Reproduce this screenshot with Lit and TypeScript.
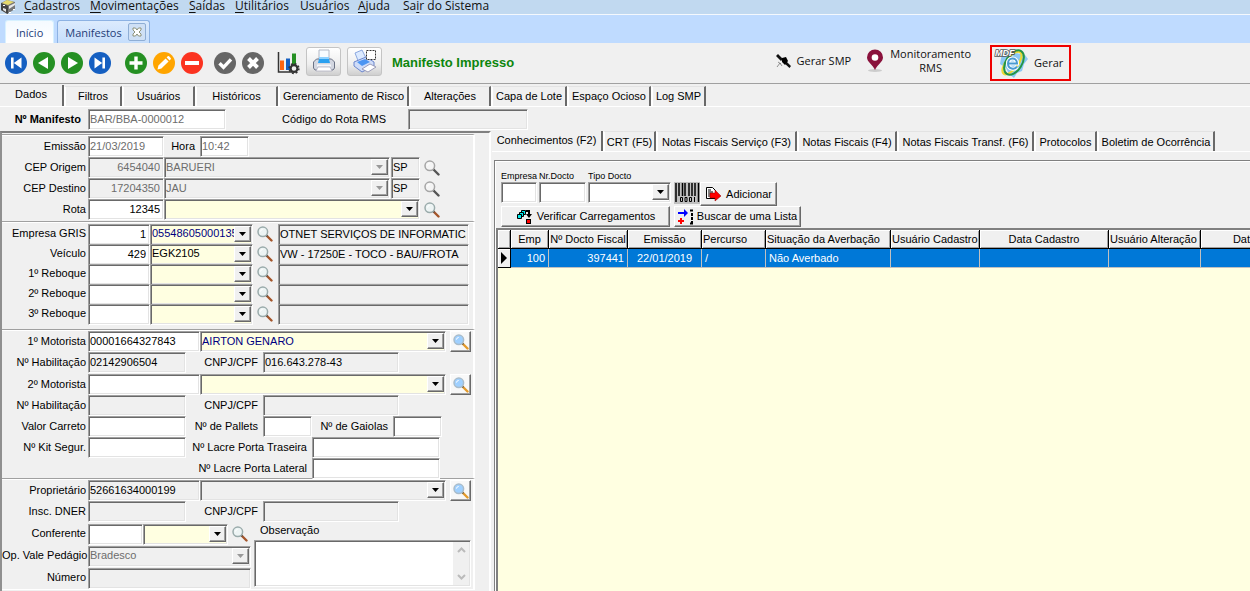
import { LitElement, html, css, svg } from "lit";
import { customElement, property } from "lit/decorators.js";
import { classMap } from "lit/directives/class-map.js";

const disc = (fill: string, glyph: unknown) => html`
  <svg width="24" height="24" viewBox="0 0 24 24" aria-hidden="true">
    <circle cx="12" cy="12" r="11" fill=${fill} />${glyph}
  </svg>`;

const NAV = [
  { label: "Primeiro", icon: disc("#155fc1", svg`<path d="M7 6.5h2.600v11H7zM17.500 6.500v11L9.800 12z" fill="#fff"/>`) },
  { label: "Anterior", icon: disc("#259023", svg`<path d="M16 6v12L6 12z" fill="#fff"/>`) },
  { label: "Próximo", icon: disc("#259023", svg`<path d="M8 6v12l10-6z" fill="#fff"/>`) },
  { label: "Último", icon: disc("#155fc1", svg`<path d="M14.400 6.500H17v11h-2.600zM6.500 6.500v11l7.700-5.500z" fill="#fff"/>`) },
];
const EDIT = [
  { label: "Incluir", icon: disc("#259023", svg`<path d="M10.300 5.500h3.400v4.800h4.800v3.400h-4.800v4.800h-3.400v-4.800H5.500v-3.400h4.800z" fill="#fff"/>`) },
  { label: "Alterar", icon: disc("#ffa500", svg`<path d="M5.500 18.500l.9-3.900 7.200-7.200 3 3-7.200 7.200zM14.600 6.400l1.100-1.100q.7-.6 1.400 0l1.600 1.600q.6.7 0 1.400l-1.100 1.100z" fill="#fff"/>`) },
  { label: "Excluir", icon: disc("#fb3320", svg`<path d="M5 10h14v4H5z" fill="#fff"/>`) },
];
const CONFIRM = [
  { label: "Confirmar", icon: disc("#666", svg`<path d="M6.500 12.300l4 4 7.500-8" fill="none" stroke="#fff" stroke-width="3.400"/>`) },
  { label: "Cancelar", icon: disc("#666", svg`<path d="M7.500 7.500l9 9M16.500 7.500l-9 9" stroke="#fff" stroke-width="4"/>`) },
];

const lens = (glass: string, rim: string, handle: string) => html`
  <svg width="16" height="16" viewBox="0 0 16 16" aria-hidden="true">
    <path d="M9.500 9.500l5 5" stroke=${handle} stroke-width="2.400" stroke-linecap="round" />
    <path d="M8.800 8.800l1.600 1.600" stroke="#555" stroke-width="1.600" />
    <circle cx="5.800" cy="5.800" r="4.800" fill=${glass} stroke=${rim} stroke-width="1.500" />
    <path d="M3.400 5.600a2.600 2.600 0 0 1 2.300-2.200" stroke="#fff" fill="none" />
  </svg>`;

const controls = css`
  input, select, textarea, button { font: inherit; color: inherit; margin: 0; border-radius: 0; }
  .field {
    box-sizing: border-box; height: 21px; padding: 0 1px; background: #fff; outline: 0;
    border: 1px solid; border-color: #a0a0a0 #fff #fff #a0a0a0;
    box-shadow: inset 1px 1px #696969, inset -1px -1px #e3e3e3;
  }
  input.field { padding: 0 2px 1px 1px; min-width: 0; }
  .combo { display: flex; padding: 1px 1px 2px; }
  .combo select {
    appearance: none; flex: 1; min-width: 0; border: 0; padding: 0; background: transparent; outline: 0; opacity: 1;
  }
  .drop {
    flex: none; width: 17px; box-sizing: border-box; display: grid; place-items: center; background: #f0f0f0;
    border: 1px solid; border-color: #fff #696969 #696969 #fff; box-shadow: inset -1px -1px #a0a0a0;
  }
  .yellow { background: #ffffe1; }
  .gray { background: #f0f0f0; }
  .dim { color: #6d6d6d; }
  input.num { text-align: right; padding-right: 3px; }
  .navy { color: #000080; }
`;

@customElement("combo-box")
class ComboBox extends LitElement {
  @property() value = "";
  @property() label = "";
  @property() look = "yellow";
  static styles = [controls, css`
    :host { display: block; min-width: 0; }
    .combo { width: 100%; }
  `];
  render() {
    const dim = this.look.includes("dim");
    return html`<div class="field combo ${this.look}">
      <select aria-label=${this.label} ?disabled=${dim}><option>${this.value}</option></select>
      <span class="drop"><svg width="7" height="4"><path d="M0 0h7L3.500 4z" fill=${dim ? "#999" : "#000"} /></svg></span>
    </div>`;
  }
}

const COLUMNS = [
  { title: "Emp", width: 38, value: "100", align: "end" },
  { title: "Nº Docto Fiscal", width: 79, value: "397441", align: "end" },
  { title: "Emissão", width: 74, value: "22/01/2019", align: "mid" },
  { title: "Percurso", width: 64, value: "/", align: "start" },
  { title: "Situação da Averbação", width: 125, value: "Não Averbado", align: "start" },
  { title: "Usuário Cadastro", width: 89, value: "", align: "start" },
  { title: "Data Cadastro", width: 129, value: "", align: "start" },
  { title: "Usuário Alteração", width: 92, value: "", align: "start" },
  { title: "Data Alteração", width: 137, value: "", align: "start" },
];

const MENU = [["", "C", "adastros"], ["", "M", "ovimentações"], ["", "S", "aídas"], ["", "U", "tilitários"], ["Usuá", "r", "ios"], ["", "A", "juda"], ["Sa", "i", "r do Sistema"]];
const PAGES = ["Dados", "Filtros", "Usuários", "Históricos", "Gerenciamento de Risco", "Alterações", "Capa de Lote", "Espaço Ocioso", "Log SMP"];
const DETAILS = ["Conhecimentos (F2)", "CRT (F5)", "Notas Fiscais Serviço (F3)", "Notas Fiscais (F4)", "Notas Fiscais Transf. (F6)", "Protocolos", "Boletim de Ocorrência"];

@customElement("app-root")
class AppRoot extends LitElement {
  static styles = [controls, css`
    :host {
      display: flex; flex-direction: column; height: 100vh; overflow: hidden;
      background: #f0f0f0; color: #000; font: 11px/13px "Liberation Sans", Arial, sans-serif;
    }
    svg { display: block; flex: none; }
    button { cursor: pointer; }
    .ui { font-family: "Open Sans", "Noto Sans", sans-serif; }

    .menu { flex: none; height: 14px; display: flex; align-items: flex-end; background: #c1d9f0; border-bottom: 1px solid #f4f8fd; font-size: 12px; line-height: 16px; }
    .menu nav { display: grid; grid-template-columns: 66px 99px 46px 65px 58px 45px auto; padding-left: 8px; }
    .menu a { color: #111; text-decoration: none; white-space: nowrap; }
    .menu u { text-underline-offset: 2px; }
    .windows { flex: none; height: 28px; display: flex; align-items: flex-end; gap: 3px; padding-left: 5px; background: #bfdbff; box-sizing: border-box; }
    .win { height: 23px; box-sizing: border-box; display: flex; align-items: center; color: #1e3c78; border: 1px solid #8db2e3; border-bottom: 0; border-radius: 3px 3px 0 0; padding: 0 7px; background: linear-gradient(#dcebfd, #c6defc); }
    .win.on { padding: 0 10px; background: linear-gradient(#f4faff, #fff); border-color: #d7f1ff; }
    .win button { display: grid; place-items: center; width: 18px; height: 18px; margin-left: 6px; margin-right: -4px; padding: 0; border: 1px solid #8faed5; border-radius: 2px; background: #cfe0f5; }

    .tools { flex: none; height: 40px; display: flex; align-items: center; border-bottom: 1px solid #a0a0a0; padding: 0 179px 0 4px; }
    .tools button { border: 0; background: none; padding: 0; }
    .set { display: flex; gap: 4px; margin-right: 12px; }
    .set:nth-child(2) { margin-right: 9px; }
    .prints { display: flex; align-items: center; gap: 6px; }
    .prints .prints { padding-bottom: 4px; }
    .tools .raised { width: 35px; height: 29px; display: grid; place-items: center; border: 1px solid #c4c4c4; border-radius: 3px; background: linear-gradient(#fff, #eee 60%, #cfcfcf); }
    .status { flex: 1; margin-left: 10px; padding-bottom: 1px; font-size: 13px; line-height: 16px; font-weight: bold; color: #0d860d; }
    .tools .act { display: flex; align-items: center; gap: 4px; line-height: 14px; padding-bottom: 4px; color: #111; }
    .tools .monitor { margin-left: 15px; gap: 6px; }
    .tools .mdfe { margin-left: 19px; height: 36px; width: 81px; box-sizing: border-box; border: 2px solid #f00000; gap: 6px; padding: 0 0 0 2px; }

    .tabs { display: grid; justify-content: start; align-items: end; flex: none; }
    .tabs button { height: 20px; padding: 0; white-space: nowrap; background: #f0f0f0; border: 0; border-left: 2px solid #fff; border-right: 2px solid #696969; border-top: 1px solid #e3e3e3; }
    .tabs button.on { border-left: 0; border-top: 0; padding-bottom: 3px; }
    .pages { height: 21px; margin-top: 1px; border-bottom: 1px solid #fff; grid-template-columns: 64px 58px 73px 83px 131px 82px 76px 84px 55px; }
    .pages .on { height: 21px; }
    .details { height: 20px; border-bottom: 1px solid #fff; grid-template-columns: 111px 53px 141px 100px 137px 63px 118px; }
    .details button { padding-top: 2px; }
    .details .on { height: 20px; padding-bottom: 1px; }

    .ident { flex: none; display: flex; align-items: center; height: 24px; padding-left: 4px; }
    .ident label { width: 77px; text-align: right; margin-right: 7px; white-space: nowrap; }
    .ident .strong { font-weight: bold; }
    .ident .route { width: 160px; margin-right: 22px; }
    .ident .number { width: 138px; }
    .ident .rms { width: 120px; }

    main { flex: 1; min-height: 0; display: flex; }
    .left { flex: none; width: 491px; box-sizing: border-box; border-top: 2px solid #808080; border-left: 2px solid #909090; border-right: 2px solid #fff; }
    .group { box-sizing: border-box; width: 473px; border-top: 1px solid #a0a0a0; border-right: 2px solid #fff; box-shadow: inset 0 1px #fff; padding: 1px 0 1px; }
    .g1 { margin-top: 1px; height: 87px; }
    .g2 { height: 108px; padding-top: 2px; }
    .g3 { height: 149px; }
    .g4 { height: 112px; border-bottom: 1px solid #fff; }
    .row { display: flex; align-items: center; height: 21px; }
    .row > label:first-child { width: 84px; text-align: right; margin-right: 2px; white-space: nowrap; flex: none; }
    .row label { flex: none; padding-bottom: 1px; }
    .row .field, .row combo-box { flex: none; }
    .g1 .row label { padding-bottom: 0; }
    .g2 .row { height: 20px; }
    .g4 .split .row { height: 22px; }
    .pair { margin-bottom: 1px; }
    .pair + .pair { margin-bottom: 0; }
    .find { width: 16px; height: 16px; padding: 0; border: 0; background: none; margin-left: 4px; flex: none; }
    .find.box { width: 21px; height: 21px; display: grid; place-items: center; background: #f8f8f8; border: 1px solid; border-color: #fff #696969 #696969 #fff; box-shadow: inset -1px -1px #a0a0a0; }
    .w29 { width: 29px; } .w48 { width: 49px; } .w55 { width: 55px; } .w61 { width: 62px; } .w75 { width: 76px; }
    .w98 { width: 98px; } .w111 { width: 112px; } .w128 { width: 128px; } .w136 { width: 136px; } .w163 { width: 163px; } .w191 { width: 191px; }
    .c85 { width: 85px; } .c102 { width: 103px; } .c225 { width: 226px; } .c245 { width: 246px; } .c255 { width: 256px; }
    .gap { margin-left: 1px; }
    .row combo-box.gap { margin-left: 0; }
    .mid { text-align: right; width: 72px; margin-right: 5px; }
    .mid.wide { width: 121px; }
    .cage { width: 76px; }
    .hour { width: 31px; margin-right: 5px; text-align: right; }
    .desc { margin-left: 5px; }
    .split { display: flex; }
    .notes { display: flex; flex-direction: column; margin-left: 3px; width: 217px; }
    .notes label { height: 17px; padding-left: 6px; padding-top: 1px; box-sizing: border-box; }
    .memo { flex: none; height: 47px; display: flex; padding: 1px; }
    .memo textarea { flex: 1; min-width: 0; border: 0; padding: 0; resize: none; outline: 0; overflow: hidden; }
    .bar { width: 16px; background: #f0f0f0; display: flex; flex-direction: column; justify-content: space-between; align-items: center; padding: 5px 0; box-sizing: border-box; }

    .right { flex: 1; min-width: 0; display: flex; flex-direction: column; padding-left: 1px; }
    .sheet { flex: 1; min-height: 0; display: flex; flex-direction: column; margin: 8px 0 0 2px; border-top: 1px solid #808080; border-left: 1px solid #808080; box-shadow: inset 1px 1px #fff; }
    .query { margin: 10px 0 0 6px; height: 57px; flex: none; }
    .line { display: flex; align-items: flex-start; }
    .entry { display: flex; flex-direction: column; font-size: 9px; line-height: 11px; margin-right: 2px; }
    .entry label { white-space: nowrap; }
    .emp { width: 36px; } .doc { width: 47px; } .kind { width: 83px; }
    .push { box-sizing: border-box; height: 21px; padding: 0 4px; display: flex; align-items: center; justify-content: center; gap: 5px; white-space: nowrap; background: #f0f0f0; border: 1px solid; border-color: #fff #696969 #696969 #fff; box-shadow: inset -1px -1px #a0a0a0; }
    .first { margin-top: 11px; height: 24px; width: 77px; gap: 4px; }
    .scan { margin: 11px 0 0 1px; padding: 0; border: 0; background: none; }
    .check { width: 169px; margin-right: 4px; }
    .list { width: 127px; gap: 3px; padding: 0 2px; }
    .grid { flex: 1; min-height: 0; margin-left: 1px; background: #ffffe1; border-top: 2px solid #808080; border-left: 2px solid #808080; overflow: hidden; }
    table { border-collapse: separate; border-spacing: 0; table-layout: fixed; width: 840px; }
    th, td { height: 19px; padding: 0 2px; box-sizing: border-box; overflow: hidden; white-space: nowrap; font-weight: normal; border-right: 1px solid #c0c0c0; border-bottom: 1px solid #c0c0c0; }
    th { background: #f0f0f0; border-color: #000; box-shadow: inset 1px 1px #fff, inset -1px -1px #a0a0a0; padding: 0 1px; }
    td { background: #0078d7; color: #fff; padding: 0 3px; }
    tbody tr > :first-child { background: #f0f0f0; border-color: #000; box-shadow: inset 1px 1px #fff; padding: 0 3px; }
    .end { text-align: right; } .center { text-align: center; } .start { text-align: left; }
    .sel { width: 13px; }
  `];

  private find(what: string, kind = "") {
    const icon = kind === "box" ? lens("#9fd0ff", "#a9bccb", "#e39a2b")
      : kind === "off" ? lens("#f4f4f4", "#a5a5a5", "#555")
      : lens("#edf4f4", "#9aabab", "#a4552a");
    return html`<button class=${classMap({ find: true, box: kind === "box" })} aria-label="Pesquisar ${what}">${icon}</button>`;
  }

  private input(id: string, cls: string, value = "") {
    return html`<input id=${id} class="field ${cls}" aria-label=${id.replace(/-/g, " ")} .value=${value} />`;
  }

  private tabs(kind: string, names: string[]) {
    return html`<div class="tabs ${kind}" role="tablist">
      ${names.map((n, i) => html`<button role="tab" aria-selected=${i === 0} class=${i === 0 ? "on" : ""}>${n}</button>`)}
    </div>`;
  }

  private place(id: string, title: string, code: string, city: string) {
    return html`<div class="row"><label for=${id}>${title}</label>${this.input(id, "w75 gray dim num", code)}
      <combo-box class="c225 gap" look="gray dim" label=${title} .value=${city}></combo-box>
      ${this.input(id + "-uf", "w29 gray gap", "SP")}${this.find(title, "off")}</div>`;
  }

  private vehicle(id: string, title: string, code: string, plate: string, text: string, look = "yellow") {
    return html`<div class="row"><label for=${id}>${title}</label>${this.input(id, "w61 num", code)}
      <combo-box class="c102 gap" look=${look} label=${title} .value=${plate}></combo-box>
      ${this.find(title)}${this.input(id + "-desc", "w191 gray desc", text)}</div>`;
  }

  private person(id: string, title: string, code: string, name: string, cls: string, look: string, doc: string, docValue: string, cpf: string) {
    return html`<div class="pair">
      <div class="row"><label for=${id}>${title}</label>${this.input(id, "w111 " + cls, code)}
        <combo-box class="c245 gap" look=${look} label=${title} .value=${name}></combo-box>${this.find(title, "box")}</div>
      <div class="row"><label for="${id}-doc">${doc}</label>${this.input(id + "-doc", "w98 gray", docValue)}
        <label class="mid" for="${id}-cpf">CNPJ/CPF</label>${this.input(id + "-cpf", "w136 gray", cpf)}</div>
    </div>`;
  }

  private toolset(items: { label: string; icon: unknown }[]) {
    return html`<div class="set">${items.map((t) => html`<button aria-label=${t.label}>${t.icon}</button>`)}</div>`;
  }

  render() {
    return html`
      <header class="menu ui">
        <svg width="16" height="14" viewBox="0 0 16 14" aria-hidden="true">
          <path d="M1 3l6-3 8 2v7l-8 5-6-4z" fill="#777" /><path d="M1 3l7 3v8l-7-4z" fill="#444" />
          <path d="M2 3l5-3 7 2-6 3z" fill="#e5d96c" /><path d="M9 6l6-3v2L9 9zM3 8l3 1v3l-3-2z" fill="#e8e8e8" /><path d="M9 12h2v1H9zM13 9h2v1h-2zM3 5h2v1H3z" fill="#fff" />
        </svg>
        <nav>${MENU.map(([a, k, b]) => html`<a href="#">${a}<u>${k}</u>${b}</a>`)}</nav>
      </header>
      <div class="windows ui">
        <div class="win on">Início</div>
        <div class="win">Manifestos<button aria-label="Fechar"><svg width="10" height="10" viewBox="0 0 10 10"><path d="M1 1h2.500L5 3l1.500-2H9v2L7 5l2 2v2H6.500L5 7 3.500 9H1V7l2-2-2-2z" fill="#fff" stroke="#777b5a" stroke-width=".8" /></svg></button></div>
      </div>

      <div class="tools">
        ${this.toolset(NAV)}${this.toolset(EDIT)}${this.toolset(CONFIRM)}
        <div class="prints">
          <button aria-label="Relatórios"><svg width="23" height="24" viewBox="0 0 23 24">
            <path d="M1.500 1v20H15" fill="none" stroke="#333" stroke-width="1.500" /><path d="M3 9.500h4V19H3z" fill="#fd6511" /><path d="M9 7.500h4V19H9z" fill="#155fc1" /><path d="M15 2.500h4V14h-4z" fill="#259023" />
            <circle cx="17" cy="17.500" r="3.400" fill="#f0f0f0" stroke="#333" stroke-width="2.200" /><circle cx="17" cy="17.500" r="4.900" fill="none" stroke="#333" stroke-width="1.500" stroke-dasharray="1.900 1.950" />
          </svg></button>
          <div class="prints">
            <button class="raised" aria-label="Imprimir"><svg width="24" height="24" viewBox="0 0 24 24">
              <path d="M7 1h10v10H7z" fill="#f7fbff" stroke="#b2b8c5" /><path d="M1.500 13l3-3h15l3 3v6l-1.500 2h-18l-1.500-2z" fill="#d3d7e1" stroke="#6c7385" />
              <path d="M7 10h10l1 4H6z" fill="#2aa0f0" /><path d="M7 8h10v2H7z" fill="#8ed1ff" /><path d="M5 15.500h14v2H5z" fill="#f5f6fa" /><path d="M6 18l-2 4h16l-2-4z" fill="#fff" stroke="#aab" stroke-width=".7" />
            </svg></button>
            <button class="raised" aria-label="Imprimir seleção"><svg width="26" height="24" viewBox="0 0 26 24">
              <path d="M3 4l7-3 5 10-8 3z" fill="#dceaff" stroke="#8ba8df" /><path d="M2 13l12-5 8 5v4l-12 6-8-6z" fill="#cfdcf8" stroke="#6b86cd" /><path d="M5 13l8-3 5 3-8 4z" fill="#4c95f2" />
              <path d="M10 20l8-5 6 3-8 5z" fill="#fff" stroke="#88a" stroke-width=".8" /><path d="M14.500 1.500h9v9h-9z" fill="#fff" stroke="#333" stroke-dasharray="2 1" />
            </svg></button>
          </div>
        </div>
        <div class="status">Manifesto Impresso</div>
        <button class="act ui"><svg width="16" height="16" viewBox="0 0 16 16"><path d="M2 1l5 5-2 2-5-5zM10 8l5 5-1.500 2-5.500-5z" fill="#111" /><path d="M6 5l4-1 2 4-3 4-3-3z" fill="#000" /><path d="M1 14l3-4 2 3M2 9l3 2" stroke="#777" fill="none" stroke-width=".8" /></svg>Gerar SMP</button>
        <button class="act monitor ui"><svg width="18" height="24" viewBox="0 0 18 24"><ellipse cx="9" cy="21.500" rx="7" ry="1.500" fill="#ccc" /><path d="M9 21C7 16 1 13 1 8.500a8 8 0 0 1 16 0C17 13 11 16 9 21z" fill="#8a123c" /><circle cx="9" cy="8.500" r="3.300" fill="#fff" /></svg><span>Monitoramento<br />RMS</span></button>
        <button class="act mdfe ui"><svg width="34" height="30" viewBox="0 0 34 30">
          <path d="M9 5l9-3 4 3 9 2 3 4-4 5-2 7-5 2-3 5-5-4-3-6-6-4 1-6z" fill="#8bc8f5" />
          <ellipse cx="18" cy="15" rx="6" ry="13.500" transform="rotate(38 18 15)" fill="none" stroke="#edda34" stroke-width="2.200" />
          <ellipse cx="20" cy="14.500" rx="8" ry="13.500" transform="rotate(32 20 14.500)" fill="none" stroke="#249447" stroke-width="2" />
          <path d="M14 15.500h9c0-7-9-6.500-9 0 0 6 7 6.500 9 3" fill="none" stroke="#fff" stroke-width="4" /><path d="M14 15.500h9c0-7-9-6.500-9 0 0 6 7 6.500 9 3" fill="none" stroke="#4a9ad1" stroke-width="2" />
          <text x="1" y="8" font-family="Liberation Sans" font-size="9" font-weight="bold" font-style="italic" fill="#fff" stroke="#555" stroke-width="1.600" paint-order="stroke">MDF</text>
        </svg>Gerar</button>
      </div>

      ${this.tabs("pages", PAGES)}
      <div class="ident">
        <label class="strong" for="manifesto">Nº Manifesto</label>${this.input("manifesto", "number dim", "BAR/BBA-0000012")}
        <label class="route" for="rms">Código do Rota RMS</label>${this.input("rms", "rms gray")}
      </div>

      <main>
        <section class="left">
          <div class="group g1">
            <div class="row"><label for="emissao">Emissão</label>${this.input("emissao", "w75 dim", "21/03/2019")}
              <label class="hour" for="hora">Hora</label>${this.input("hora", "w48 dim", "10:42")}</div>
            ${this.place("origem", "CEP Origem", "6454040", "BARUERI")}
            ${this.place("destino", "CEP Destino", "17204350", "JAU")}
            <div class="row"><label for="rota">Rota</label>${this.input("rota", "w75 num", "12345")}
              <combo-box class="c255 gap" label="Rota"></combo-box>${this.find("Rota")}</div>
          </div>
          <div class="group g2">
            ${this.vehicle("gris", "Empresa GRIS", "1", "05548605000135", "OTNET SERVIÇOS DE INFORMATICA LTDA", "yellow navy")}
            ${this.vehicle("veiculo", "Veículo", "429", "EGK2105", "VW - 17250E - TOCO - BAU/FROTA")}
            ${["1º", "2º", "3º"].map((n, i) => this.vehicle("reboque" + i, n + " Reboque", "", "", ""))}
          </div>
          <div class="group g3">
            ${this.person("motorista1", "1º Motorista", "00001664327843", "AIRTON GENARO", "", "yellow navy", "Nº Habilitação", "02142906504", "016.643.278-43")}
            ${this.person("motorista2", "2º Motorista", "", "", "", "yellow", "Nº Habilitação", "", "")}
            <div class="row"><label for="carreto">Valor Carreto</label>${this.input("carreto", "w98")}
              <label class="mid" for="pallets">Nº de Pallets</label>${this.input("pallets", "w48")}
              <label class="mid cage" for="gaiolas">Nº de Gaiolas</label>${this.input("gaiolas", "w48")}</div>
            <div class="row"><label for="kit">Nº Kit Segur.</label>${this.input("kit", "w98")}
              <label class="mid wide" for="traseira">Nº Lacre Porta Traseira</label>${this.input("traseira", "w128")}</div>
            <div class="row"><label></label><span class="w98"></span>
              <label class="mid wide" for="lateral">Nº Lacre Porta Lateral</label>${this.input("lateral", "w128")}</div>
          </div>
          <div class="group g4">
            ${this.person("dono", "Proprietário", "52661634000199", "", "gray", "gray", "Insc. DNER", "", "")}
            <div class="split">
              <div>
                <div class="row"><label for="conferente">Conferente</label>${this.input("conferente", "w55")}
                  <combo-box class="c85 gap" label="Conferente"></combo-box>${this.find("Conferente")}</div>
                <div class="row"><label>Op. Vale Pedágio</label><combo-box class="w163" look="gray dim" label="Op. Vale Pedágio" value="Bradesco"></combo-box></div>
                <div class="row"><label for="numero">Número</label>${this.input("numero", "w163 gray")}</div>
              </div>
              <div class="notes"><label for="obs">Observação</label>
                <div class="field memo"><textarea id="obs"></textarea><span class="bar">
                  <svg width="9" height="6"><path d="M1 5l3.500-3.500L8 5" fill="none" stroke="#bbb" stroke-width="2" /></svg>
                  <svg width="9" height="6"><path d="M1 1l3.500 3.500L8 1" fill="none" stroke="#bbb" stroke-width="2" /></svg></span></div>
              </div>
            </div>
          </div>
        </section>

        <section class="right">
          ${this.tabs("details", DETAILS)}
          <div class="sheet">
            <div class="query">
              <div class="line">
                <div class="entry"><label for="empresa">Empresa</label><input id="empresa" class="field emp" /></div>
                <div class="entry"><label for="docto">Nr.Docto</label><input id="docto" class="field doc" /></div>
                <div class="entry"><label>Tipo Docto</label><combo-box class="kind" look="" label="Tipo Docto"></combo-box></div>
                <button class="scan" aria-label="Código de barras"><svg width="26" height="22" viewBox="0 0 26 22">
                  <path d="M0 0h26v22H0z" fill="#c0c0c0" /><path d="M2 1v19M5 1v13M8.500 1v13M11 1v13M15 1v13M18 1v13M21 1v13M24.500 1v19" stroke="#000" stroke-width="1.500" />
                  <path d="M6.500 15.500h2v4h-2zM11 15.500h2v4h-2zM15.500 15.500h2v4h-2zM20.500 15v5" fill="none" stroke="#000" />
                </svg></button>
                <button class="push first"><svg width="17" height="16" viewBox="0 0 17 16"><path d="M1.500 1.500h6l3 3v8h-9z" fill="#fff" stroke="#000" /><path d="M3 4h3M3 6h5M3 8h3M3 10h3" stroke="#000" /><path d="M5 7h5V4l6 6-6 5v-3H5z" fill="#f00" stroke="#800" stroke-width=".5" /></svg>Adicionar</button>
              </div>
              <div class="line">
                <button class="push check"><svg width="16" height="16" viewBox="0 0 16 16"><path d="M5.500 1.500h4v4h-4z" fill="#0ee" stroke="#000" /><path d="M3.500 3.500h4v4h-4z" fill="#0ee" stroke="#000" /><path d="M1.500 5.500h4v4h-4z" fill="#0ee" stroke="#000" /><path d="M10 2h3v4" fill="none" stroke="#000" stroke-width="2" /><path d="M10 5h6l-3 4zM10 10h5v5h-5z" /><path d="M11 11h3v3h-3z" fill="#f00" /></svg>Verificar Carregamentos</button>
                <button class="push list"><svg width="16" height="16" viewBox="0 0 16 16"><path d="M0 3h6V0l4 4-4 4V5H0z" fill="#00f" /><path d="M0 12h6M3 9v6" stroke="#f00" stroke-width="2" /><path d="M12 1.500h3M14 4v12M12 14.500h3" fill="none" stroke="#000" stroke-width="2" stroke-dasharray="3 1" /></svg>Buscar de uma Lista</button>
              </div>
            </div>
            <div class="grid">
              <table>
                <colgroup><col class="sel" />${COLUMNS.map((c) => html`<col style="width:${c.width}px" />`)}</colgroup>
                <thead><tr><th></th>${COLUMNS.map((c) => html`<th class=${/Percurso|Situação|Usuário/.test(c.title) ? "start" : "center"}>${c.title}</th>`)}</tr></thead>
                <tbody><tr><td><svg width="6" height="12"><path d="M0 0v12l6-6z" /></svg></td>
                  ${COLUMNS.map((c) => html`<td class=${c.align === "mid" ? "center" : c.align}>${c.value}</td>`)}</tr></tbody>
              </table>
            </div>
          </div>
        </section>
      </main>`;
  }
}
